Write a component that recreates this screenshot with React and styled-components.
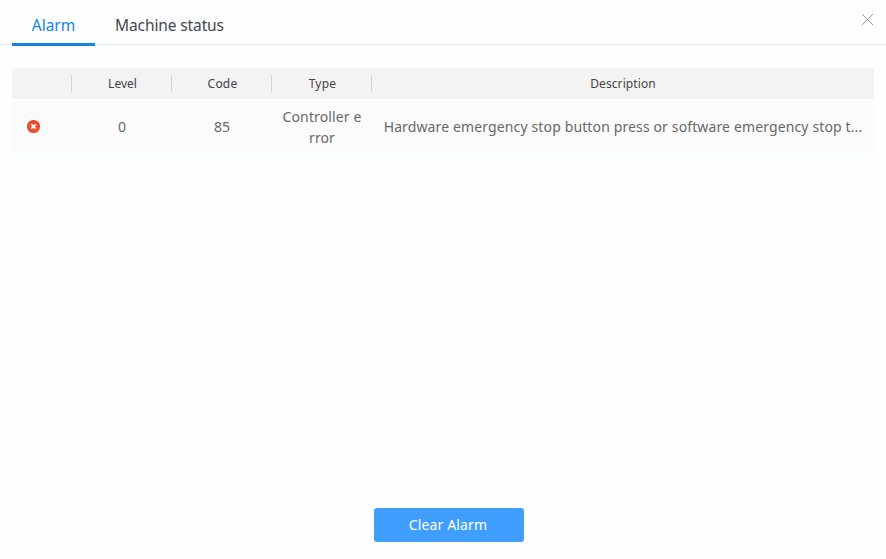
import React from "react";
import styled, { createGlobalStyle } from "styled-components";

const GlobalStyle = createGlobalStyle`
  * { box-sizing: border-box; }
  body {
    margin: 0;
    background: #fdfeff;
    font-family: "Noto Sans", "Open Sans", sans-serif;
  }
`;

const Dialog = styled.main`
  display: flex;
  flex-direction: column;
  width: 886px;
  height: 559px;
  overflow: hidden;
`;

const Header = styled.header`
  display: flex;
  justify-content: space-between;
  height: 45px;
  padding: 0 12px;
  border-bottom: 1px solid #e9eaec;
`;

const Tabs = styled.nav`
  display: flex;
  height: 46px;
`;

const Tab = styled.button`
  width: ${(p) => p.$width}px;
  height: 46px;
  padding: 7px 0 0;
  border: 0;
  border-bottom: 3px solid ${(p) => (p.$active ? "#1683e6" : "transparent")};
  background: none;
  color: ${(p) => (p.$active ? "#1683e6" : "#46484c")};
  font-family: inherit;
  font-size: 15.5px;
  letter-spacing: ${(p) => p.$spacing || 0}px;
  line-height: 36px;
  white-space: nowrap;
`;

const CloseButton = styled.button`
  display: flex;
  width: 13px;
  height: 13px;
  margin: 13px 0 0;
  padding: 0;
  border: 0;
  background: none;
`;

const Table = styled.section`
  margin: 23px 12px 0;
`;

const Row = styled.div`
  display: grid;
  grid-template-columns: 60px 100px 100px 100px 1fr;
  align-items: center;
`;

const HeadRow = styled(Row)`
  height: 31px;
  background: #f3f3f3;
`;

const HeadCell = styled.div`
  height: 17px;
  padding-left: ${(p) => (p.$last ? 0 : 2)}px;
  border-right: ${(p) => (p.$last ? "0" : "1px solid #d2d2d2")};
  color: #444;
  font-size: 12px;
  letter-spacing: ${(p) => p.$spacing || 0}px;
  line-height: 17px;
  text-align: center;
`;

const BodyRow = styled(Row)`
  height: 52px;
  margin-top: 2px;
  background: #fbfbfb;
`;

const Cell = styled.div`
  padding-bottom: ${(p) => (p.$multiline ? 0 : 2)}px;
  color: #686868;
  font-size: 14px;
  line-height: 21px;
  text-align: center;
  white-space: nowrap;
  letter-spacing: ${(p) => p.$spacing || 0}px;
`;

const IconCell = styled.div`
  display: flex;
  padding: 0 0 1px 15px;
`;

const Footer = styled.footer`
  display: flex;
  justify-content: center;
  margin-top: auto;
  padding: 0 0 17px 12px;
`;

const ClearButton = styled.button`
  width: 150px;
  height: 34px;
  padding: 0 2px 0 0;
  border: 0;
  border-radius: 3px;
  background: #409eff;
  color: #fff;
  font-family: inherit;
  font-size: 14px;
  letter-spacing: 0.15px;
  line-height: 34px;
`;

const CloseIcon = () => (
  <svg width="13" height="13" viewBox="0 0 13 13" fill="none" stroke="#92959b">
    <path d="M1 1L12 12M12 1L1 12" />
  </svg>
);

const ErrorIcon = () => (
  <svg width="13" height="13" viewBox="0 0 13 13">
    <circle cx="6.5" cy="6.5" r="6.6" fill="#e8502f" />
    <path d="M4.3 4.3L8.7 8.7M8.7 4.3L4.3 8.7" stroke="#fff" strokeWidth="1.7" />
  </svg>
);

export default function App() {
  return (
    <>
      <GlobalStyle />
      <Dialog>
        <Header>
          <Tabs>
            <Tab $active $width={83}>Alarm</Tab>
            <Tab $width={149} $spacing={-0.12}>Machine status</Tab>
          </Tabs>
          <CloseButton aria-label="Close"><CloseIcon /></CloseButton>
        </Header>
        <Table>
          <HeadRow>
            <HeadCell />
            <HeadCell>Level</HeadCell>
            <HeadCell $spacing={0.2}>Code</HeadCell>
            <HeadCell $spacing={0.2}>Type</HeadCell>
            <HeadCell $last $spacing={0.1}>Description</HeadCell>
          </HeadRow>
          <BodyRow>
            <IconCell><ErrorIcon /></IconCell>
            <Cell>0</Cell>
            <Cell>85</Cell>
            <Cell $multiline $spacing={0.12}>Controller e<br />rror</Cell>
            <Cell $spacing={0.13}>Hardware emergency stop button press or software emergency stop t...</Cell>
          </BodyRow>
        </Table>
        <Footer>
          <ClearButton>Clear Alarm</ClearButton>
        </Footer>
      </Dialog>
    </>
  );
}
